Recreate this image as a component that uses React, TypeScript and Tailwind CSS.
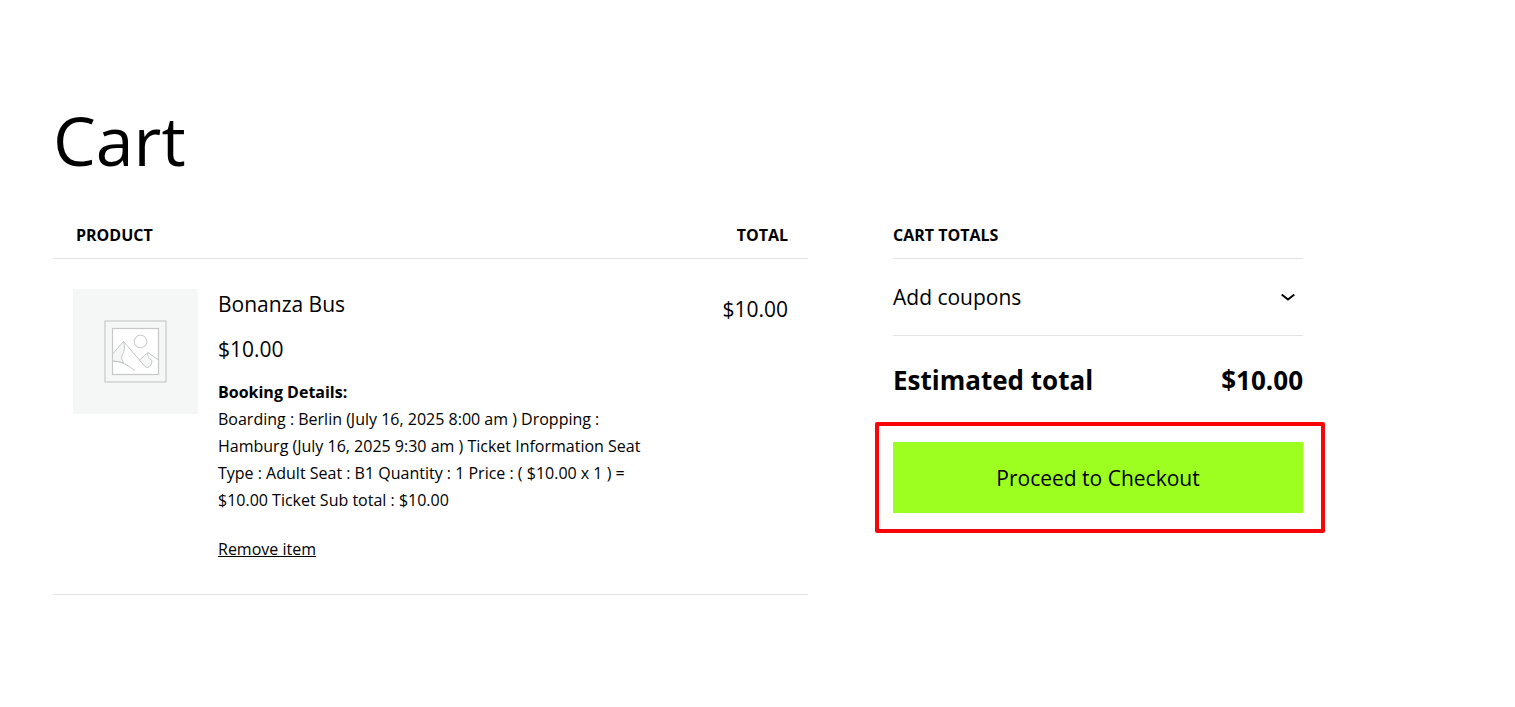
import { useState } from "react";

function PlaceholderImage() {
  return (
    <svg viewBox="0 0 125 125" className="size-[125px]" role="img" aria-label="Bonanza Bus" fill="none" stroke="#c6c8c8">
      <rect width="125" height="125" fill="#f5f7f7" stroke="none" />
      <rect x="32" y="32" width="61" height="61" strokeWidth="1.2" />
      <rect x="39.500" y="39.500" width="46" height="46" fill="#fff" strokeWidth="1.2" />
      <circle cx="67.500" cy="52.500" r="6.300" />
      <path d="M39.500 65 L50.500 52.500 Q53 61 49 66.500 Q47.500 70 50.500 74 Q45 72 39.500 72 Z" fill="#f5f7f7" />
      <path d="M50.500 52.500 L71.500 77" />
      <path d="M66.500 71 L75 63.500 Q73.500 68 79 71.500 Q79 77 74.500 78.500 Q72.500 78.500 71 76.500 Z" fill="#f5f7f7" />
      <path d="M75 63.500 L85.500 71" />
      <path d="M39.500 72 Q50 72 62 81.500" />
    </svg>
  );
}

function CartItems() {
  return (
    <table className="w-full table-fixed border-collapse">
      <colgroup>
        <col className="w-[165px]" />
        <col />
        <col className="w-[150px]" />
      </colgroup>
      <thead>
        <tr className="border-b border-[#e3e3e3] text-base leading-6 font-bold uppercase">
          <th colSpan={2} className="pb-[11px] pl-[23px] text-left">Product</th>
          <th className="pr-5 pb-[11px] text-right">Total</th>
        </tr>
      </thead>
      <tbody>
        <tr className="border-b border-[#e3e3e3] align-top">
          <td className="pt-[30px] pl-5">
            <PlaceholderImage />
          </td>
          <td className="pt-[30px] pr-1 pb-[31px]">
            <a href="#product" className="block text-[21px] leading-[30px]">Bonanza Bus</a>
            <div className="mt-[15px] text-[21px] leading-[30px]">$10.00</div>
            <div className="mt-[15px] text-base leading-[27px]">
              <p className="font-bold">Booking Details:</p>
              <p>
                Boarding : Berlin (July 16, 2025 8:00 am ) Dropping : Hamburg (July 16, 2025 9:30 am ) Ticket
                Information Seat Type : Adult Seat : B1 Quantity : 1 Price : ( $10.00 x 1 ) = $10.00 Ticket Sub
                total : $10.00
              </p>
            </div>
            <button type="button" className="mt-[22px] text-base leading-[27px] underline">Remove item</button>
          </td>
          <td className="pt-[35px] pr-5 text-right text-[21px] leading-[30px]">$10.00</td>
        </tr>
      </tbody>
    </table>
  );
}

function CartTotals() {
  const [open, setOpen] = useState(false);

  return (
    <aside className="w-[410px] shrink-0">
      <h2 className="border-b border-[#e3e3e3] pb-[11px] text-base leading-6 font-bold uppercase">Cart totals</h2>
      <div className="border-b border-[#e3e3e3] py-[23px]">
        <button
          type="button"
          aria-expanded={open}
          onClick={() => setOpen(!open)}
          className="flex w-full items-center justify-between pr-2 text-[21px] leading-[30px]"
        >
          Add coupons
          <svg viewBox="0 0 14 8" className="h-2 w-3.5" fill="none" stroke="currentColor" strokeWidth="2">
            <path d="M0.700 1.500 L7 6.500 L13.300 1.500" />
          </svg>
        </button>
        {open && <input type="text" aria-label="Enter code" className="mt-4 w-full border border-black px-3 py-2" />}
      </div>
      <div className="mt-6 flex items-center justify-between text-[26px] leading-10 font-bold">
        <span>Estimated total</span>
        <span>$10.00</span>
      </div>
      <div className="relative mt-[42px]">
        <button type="button" className="h-[71px] w-full bg-[#9dff20] text-[21px] leading-[30px]">
          Proceed to Checkout
        </button>
        <div className="pointer-events-none absolute -inset-y-5 -right-[22px] -left-[18px] rounded-xs border-4 border-[#f80509]" />
      </div>
    </aside>
  );
}

export default function App() {
  return (
    <div className="min-h-screen bg-white pt-[90px] pb-24 pl-[53px] font-['Open_Sans','Noto_Sans',sans-serif] text-black">
      <main className="max-w-[1250px]">
        <h1 className="text-[68px] leading-[100px]">Cart</h1>
        <div className="mt-[33px] flex items-start gap-[85px]">
          <div className="min-w-0 flex-1">
            <CartItems />
          </div>
          <CartTotals />
        </div>
      </main>
    </div>
  );
}
